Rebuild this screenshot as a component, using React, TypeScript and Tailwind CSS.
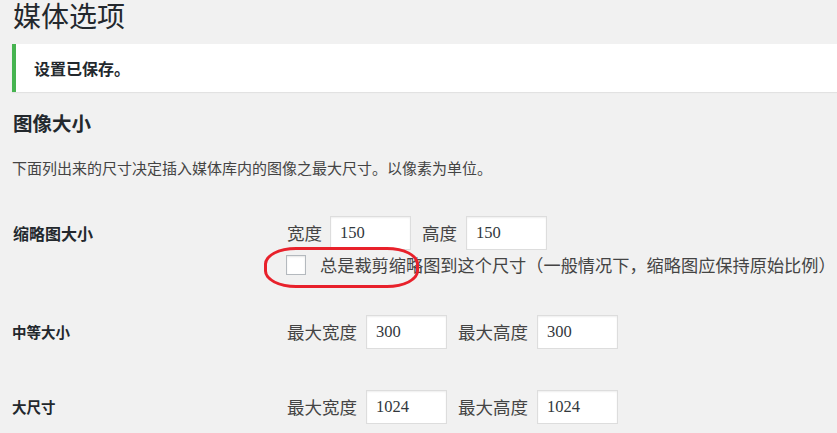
import React from "react";

const cjk = { fontFamily: '"Noto Sans CJK SC", "Noto Sans", sans-serif' };
const num = { fontFamily: '"Liberation Serif", "DejaVu Serif", serif' };

function NumInput({ value }: { value: string }) {
  return (
    <div
      className="w-[81px] h-[34px] bg-white border border-[#dddddd] shadow-[inset_0_1px_2px_rgba(0,0,0,0.07)] flex items-center pl-[9px] text-[16.5px] text-[#32373c]"
      style={num}
    >
      {value}
    </div>
  );
}

function FieldLabel({ children }: { children: React.ReactNode }) {
  return <span className="text-[17.5px] leading-[34px] text-[#444]">{children}</span>;
}

export default function App() {
  return (
    <div className="w-[837px] h-[433px] overflow-hidden bg-[#f1f1f1] relative" style={cjk}>
      <div className="pl-[12px]">
        <h1 className="leading-[30px] text-[28px] font-normal text-[#23282d] pl-px">媒体选项</h1>
        <div className="mt-[14px] h-[48px] bg-white border-l-4 border-[#46b450] shadow-[0_1px_1px_rgba(0,0,0,0.06)] flex items-center pl-[18px]">
          <span className="text-[16px] font-semibold text-[#23282d] leading-none">设置已保存。</span>
        </div>
        <h2 className="mt-[19px] h-[24px] leading-[24px] text-[19.5px] font-semibold text-[#23282d] pl-px">图像大小</h2>
        <p className="mt-[23px] h-[20px] leading-[20px] text-[15px] text-[#444]">
          下面列出来的尺寸决定插入媒体库内的图像之最大尺寸。以像素为单位。
        </p>

        {/* Thumbnail row */}
        <div className="mt-[38px] flex items-start">
          <div className="w-[275px] shrink-0 h-[34px] flex items-center pl-px">
            <span className="text-[16px] font-semibold text-[#23282d]">缩略图大小</span>
          </div>
          <div className="flex flex-col">
            <div className="flex items-center">
              <FieldLabel>宽度</FieldLabel>
              <div className="ml-[8px]"><NumInput value="150" /></div>
              <div className="ml-[11px]"><FieldLabel>高度</FieldLabel></div>
              <div className="ml-[9px]"><NumInput value="150" /></div>
            </div>
            <div className="mt-[5px] flex items-center h-[20px]">
              <div className="-ml-px shrink-0 w-[20px] h-[20px] bg-white border border-[#b4b9be] shadow-[inset_0_1px_2px_rgba(0,0,0,0.1)]" />
              <span className="ml-[14px] text-[17.2px] leading-[20px] text-[#444] whitespace-nowrap">
                总是裁剪缩略图到这个尺寸（一般情况下，缩略图应保持原始比例）
              </span>
            </div>
          </div>
        </div>

        {/* Medium row */}
        <div className="mt-[40px] flex items-start">
          <div className="w-[275px] shrink-0 h-[34px] flex items-center">
            <span className="text-[14.5px] font-semibold text-[#23282d]">中等大小</span>
          </div>
          <div className="flex items-center">
            <FieldLabel>最大宽度</FieldLabel>
            <div className="ml-[9px]"><NumInput value="300" /></div>
            <div className="ml-[11px]"><FieldLabel>最大高度</FieldLabel></div>
            <div className="ml-[9px]"><NumInput value="300" /></div>
          </div>
        </div>

        {/* Large row */}
        <div className="mt-[41px] flex items-start">
          <div className="w-[275px] shrink-0 h-[34px] flex items-center">
            <span className="text-[14.5px] font-semibold text-[#23282d]">大尺寸</span>
          </div>
          <div className="flex items-center">
            <FieldLabel>最大宽度</FieldLabel>
            <div className="ml-[9px]"><NumInput value="1024" /></div>
            <div className="ml-[11px]"><FieldLabel>最大高度</FieldLabel></div>
            <div className="ml-[9px]"><NumInput value="1024" /></div>
          </div>
        </div>
      </div>

      {/* red annotation ellipse */}
      <div className="absolute left-[264px] top-[247px] w-[155px] h-[41px] border-[3px] border-[#e8212b] rounded-[32px/17px]" />
    </div>
  );
}
